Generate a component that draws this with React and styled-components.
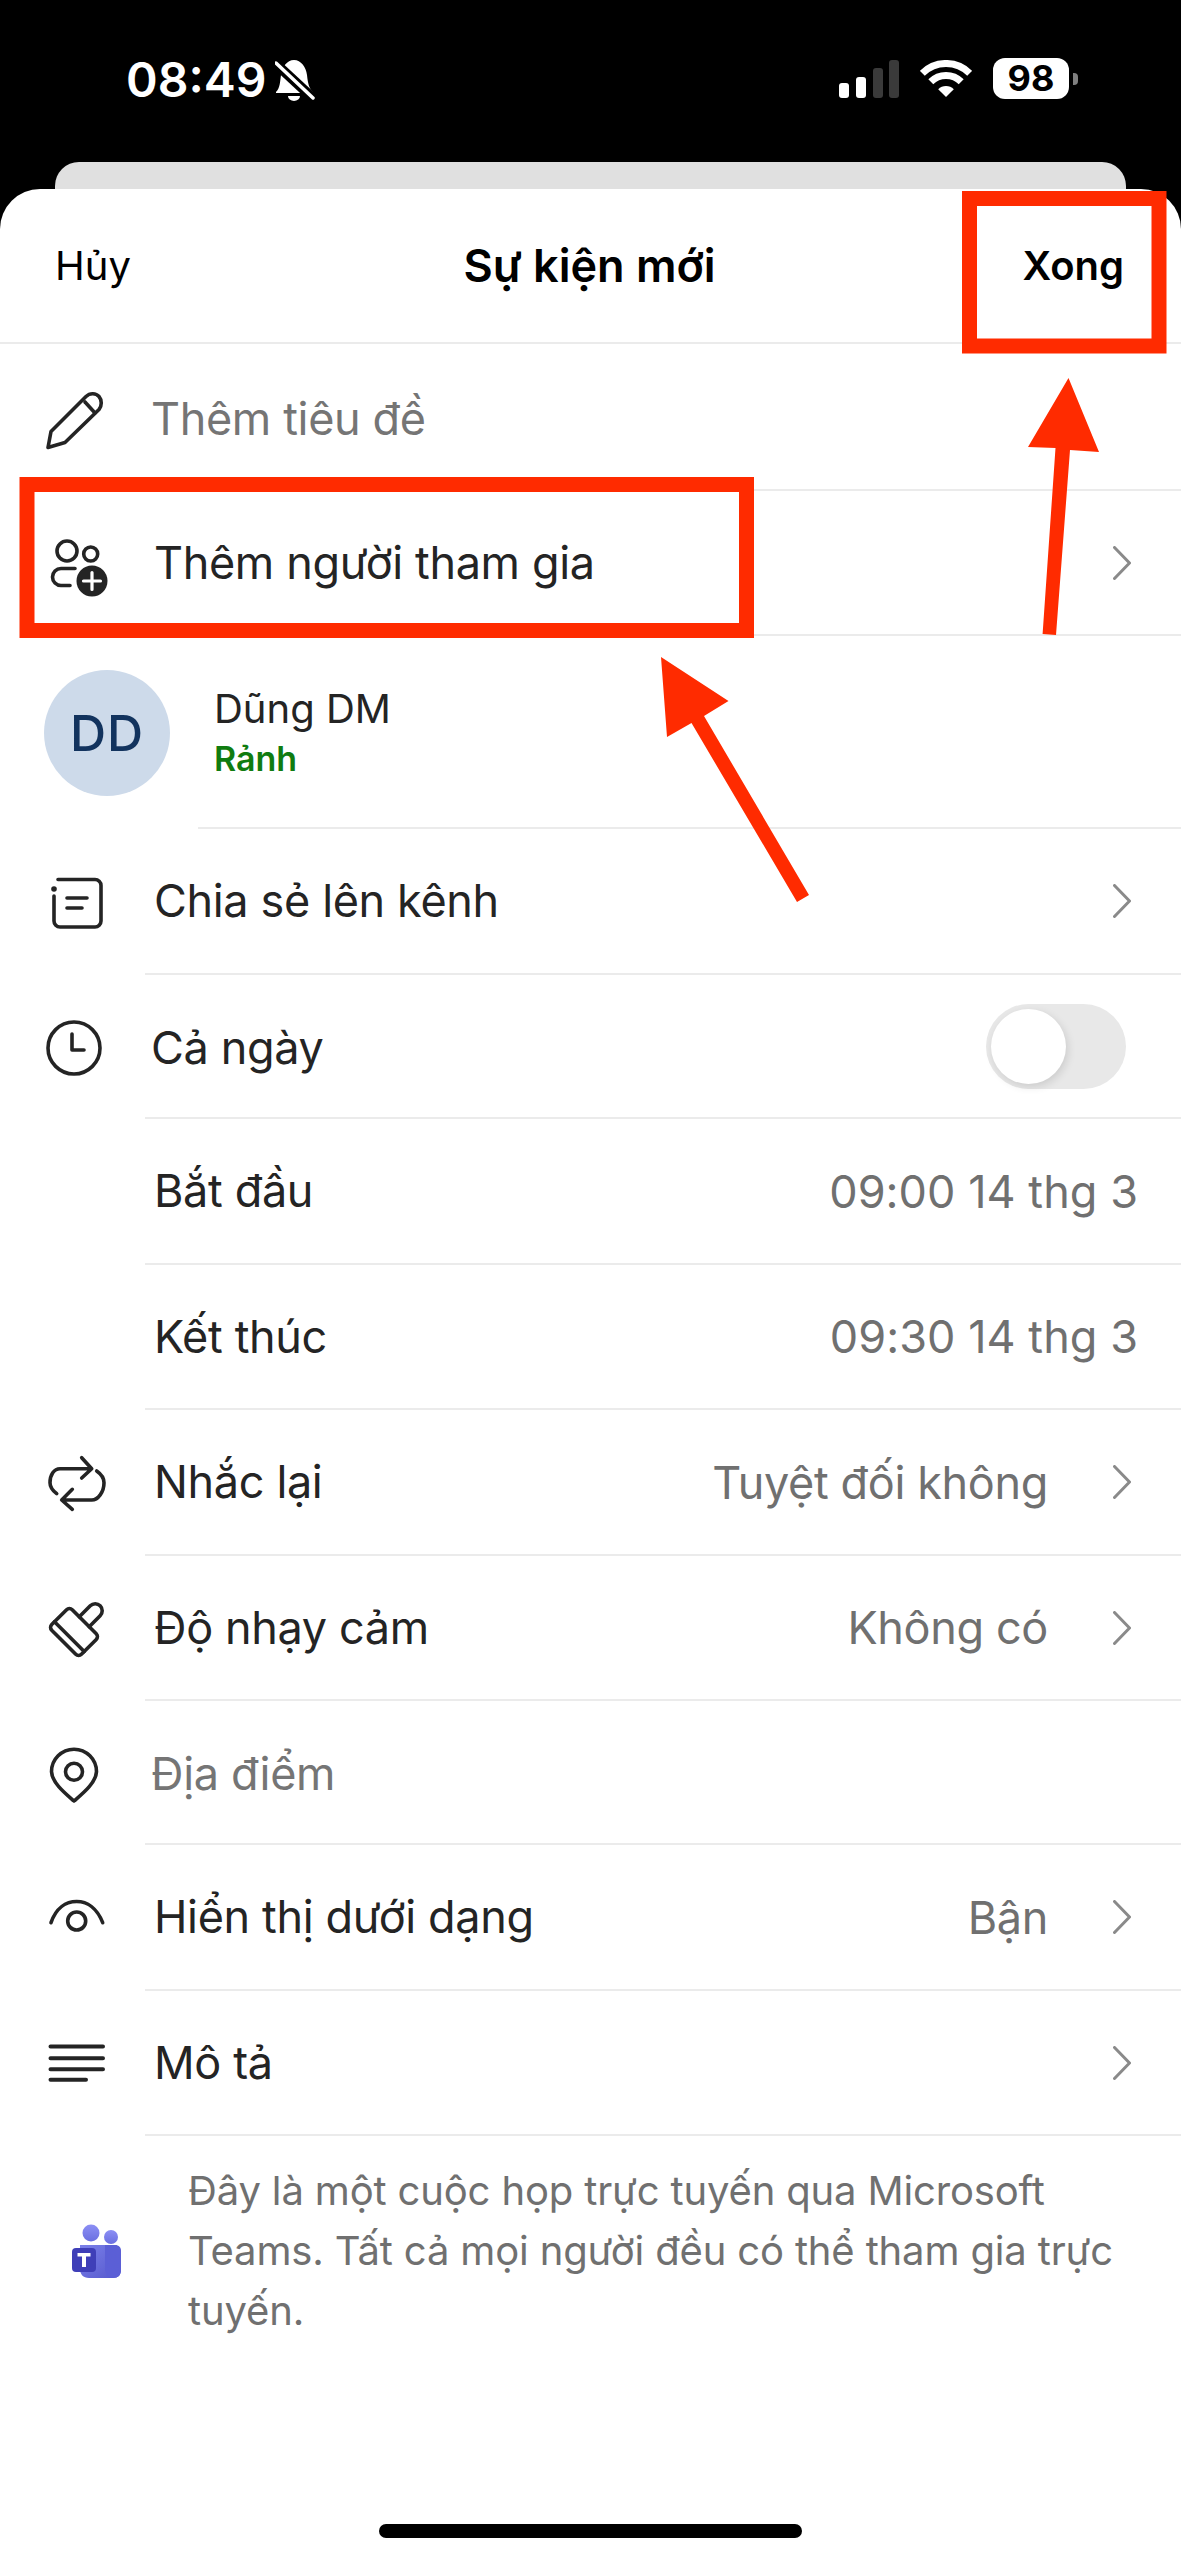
import React from 'react';
import styled, { createGlobalStyle } from 'styled-components';

const GlobalStyle = createGlobalStyle`
  html, body {
    margin: 0;
    padding: 0;
    background: #000;
  }
  * {
    box-sizing: border-box;
  }
`;

const Page = styled.div`
  position: relative;
  width: 1181px;
  height: 2560px;
  overflow: hidden;
  background: #000;
  display: flex;
  flex-direction: column;
  font-family: Inter, "Noto Sans", sans-serif;
  color: #242424;
`;

const StatusBar = styled.div`
  height: 162px;
  flex: none;
  display: flex;
  justify-content: space-between;
  align-items: flex-start;
  padding: 58px 103px 0 126px;
  color: #fff;
`;

const StatusLeft = styled.div`
  display: flex;
  align-items: center;
  gap: 9px;
`;

const Clock = styled.span`
  font-size: 48px;
  line-height: 44px;
  font-weight: 600;
`;

const StatusRight = styled.div`
  display: flex;
  align-items: center;
  gap: 21px;
`;

const Battery = styled.div`
  position: relative;
  width: 76px;
  height: 41px;
  margin-right: 9px;
  border-radius: 12px;
  background: #fff;
  color: #000;
  font-size: 36px;
  line-height: 41px;
  font-weight: 700;
  text-align: center;

  &::after {
    content: '';
    position: absolute;
    top: 15px;
    right: -9px;
    width: 5px;
    height: 12px;
    border-radius: 0 4px 4px 0;
    background: #7f7f7f;
  }
`;

const BackCard = styled.div`
  height: 27px;
  flex: none;
  margin: 0 55px;
  border-radius: 24px 24px 0 0;
  background: #e0e0e0;
`;

const Sheet = styled.div`
  flex: 1;
  display: flex;
  flex-direction: column;
  background: #fff;
  border-radius: 40px 40px 0 0;
`;

const Header = styled.div`
  height: 155px;
  flex: none;
  display: grid;
  grid-template-columns: 1fr auto 1fr;
  align-items: center;
  padding: 0 57px 0 55px;
  border-bottom: 2px solid #ebebeb;
  color: #000;
`;

const Cancel = styled.span`
  font-size: 40px;
`;

const Title = styled.span`
  font-size: 45px;
  font-weight: 600;
`;

const Done = styled.span`
  justify-self: end;
  font-size: 40px;
  font-weight: 600;
`;

const Row = styled.div`
  display: flex;
  height: ${p => p.$h}px;
  flex: none;
`;

const IconSlot = styled.div`
  width: 145px;
  flex: none;
  display: flex;
  align-items: center;
  padding-left: 46px;
`;

const Glyph = styled.svg`
  width: 60px;
  height: 60px;
  overflow: visible;
  fill: none;
  stroke: #242424;
  stroke-width: 3.6;
  stroke-linecap: round;
  stroke-linejoin: round;
`;

const RowBody = styled.div`
  flex: 1;
  min-width: 0;
  display: flex;
  align-items: center;
  padding: 0 ${p => (p.$chevron ? 50 : 43)}px 0 ${p => (p.$field ? 6 : 9)}px;
  border-bottom: 2px solid #ebebeb;
`;

const Label = styled.span`
  flex: 1;
  font-size: 45px;
  line-height: 60px;
  letter-spacing: -0.35px;
  color: ${p => (p.$placeholder ? '#757575' : '#242424')};
  position: relative;
  top: ${p => (p.$field ? 2 : 0)}px;
`;

const Value = styled.span`
  font-size: 45px;
  letter-spacing: ${p => (p.$tight ? '-0.35px' : '0.05px')};
  color: #707070;
`;

const Chevron = styled.svg`
  width: 18px;
  height: 34px;
  margin-left: 65px;
  flex: none;
  fill: none;
  stroke: #8a8a8a;
  stroke-width: 3;
  stroke-linecap: round;
  stroke-linejoin: round;
`;

const Toggle = styled.div`
  position: relative;
  width: 140px;
  height: 85px;
  margin-right: 12px;
  border-radius: 43px;
  background: #e8e8e8;
`;

const ToggleKnob = styled.div`
  position: absolute;
  top: 5px;
  left: 5px;
  width: 75px;
  height: 75px;
  border-radius: 50%;
  background: #fff;
  box-shadow: 2px 3px 8px rgba(0, 0, 0, 0.12);
`;

const AvatarSlot = styled.div`
  width: 198px;
  flex: none;
  display: flex;
  align-items: center;
  padding-left: 44px;
`;

const Avatar = styled.div`
  width: 126px;
  height: 126px;
  border-radius: 50%;
  display: flex;
  align-items: center;
  justify-content: center;
  background: #cddaea;
  color: #12335e;
  font-size: 50px;
  font-weight: 500;
  letter-spacing: 1px;
`;

const PersonBody = styled.div`
  flex: 1;
  display: flex;
  flex-direction: column;
  justify-content: center;
  padding: 0 0 0 16px;
  border-bottom: 2px solid #ebebeb;
`;

const PersonName = styled.span`
  font-size: 40px;
  line-height: 52px;
`;

const PersonStatus = styled.span`
  font-size: 34px;
  line-height: 44px;
  margin-top: 2px;
  font-weight: 600;
  color: #107c10;
`;

const NoteRow = styled.div`
  display: flex;
  align-items: center;
  padding-top: 25px;
`;

const NoteIcon = styled.div`
  width: 188px;
  flex: none;
  display: flex;
  padding-left: 71px;
`;

const NoteText = styled.p`
  margin: 0;
  width: 950px;
  font-size: 40px;
  line-height: 60px;
  letter-spacing: -0.15px;
  color: #707070;
`;

const HomeBar = styled.div`
  width: 423px;
  height: 14px;
  flex: none;
  margin: auto auto 22px;
  border-radius: 7px;
  background: #000;
`;

// annotation drawn over the screenshot: red boxes and arrows
const Annotations = styled.svg`
  position: absolute;
  top: 0;
  left: 0;
  width: 1181px;
  height: 2560px;
  pointer-events: none;
`;

const Mute = () => (
  <svg width="40" height="41" viewBox="0 0 40 41">
    <path fill="#fff" d="M19 0C26 0 31 7 32 15C33 24 34 28 38 32V33H1V32C5 28 5 22 6 15C7 7 12 0 19 0Z" />
    <path fill="#fff" d="M13 36H25A6 5 0 0 1 13 36Z" />
    <path stroke="#000" strokeWidth="10" d="M0 3L40 40" />
    <path stroke="#fff" strokeWidth="3.5" strokeLinecap="round" d="M1 3L38 38" />
  </svg>
);

const Signal = () => (
  <svg width="60" height="38" viewBox="0 0 60 38">
    <rect x="0" y="23" width="10" height="15" rx="3" fill="#fff" />
    <rect x="17" y="17" width="10" height="21" rx="3" fill="#fff" />
    <rect x="34" y="8" width="10" height="30" rx="3" fill="#3a3a3a" />
    <rect x="50" y="0" width="10" height="38" rx="3" fill="#3a3a3a" />
  </svg>
);

const Wifi = () => (
  <svg width="52" height="38" viewBox="0 0 52 38" fill="none" stroke="#fff" strokeWidth="7">
    <path d="M2.3 13.3A33.5 33.5 0 0 1 49.7 13.3" />
    <path d="M10.8 21.8A21.5 21.5 0 0 1 41.2 21.8" />
    <path fill="#fff" stroke="none" d="M26 37L18.2 29.2A11 11 0 0 1 33.8 29.2Z" />
  </svg>
);

const icons = {
  pencil: (
    <>
      <path d="M2 59.5L5 43.5L40 8.5C44 4.5 50 5 53 8.5C56 12 56 18 53 21.5L19 54.5Z" />
      <path d="M39 14L49 25" />
    </>
  ),
  people: (
    <>
      <circle cx="21" cy="17" r="10" />
      <circle cx="44.7" cy="20" r="7" />
      <path d="M29 34.5H15a8.5 8.5 0 0 0 0 17H24" />
      <circle cx="46" cy="47" r="15.5" fill="#242424" stroke="none" />
      <path d="M46 38.5V55.5M37.5 47H54.5" stroke="#fff" strokeWidth="3.2" />
    </>
  ),
  share: (
    <>
      <path d="M12 7.5H49a6 6 0 0 1 6 6V49a6 6 0 0 1-6 6H14a6 6 0 0 1-6-6V24" />
      <circle cx="8" cy="17" r="2.8" fill="#242424" stroke="none" />
      <path d="M21 26H41M21 36H36" />
    </>
  ),
  clock: (
    <>
      <circle cx="28" cy="31" r="26" />
      <path d="M26 17V33H38" />
    </>
  ),
  repeat: (
    <>
      <path d="M10.7 40.7C6 37 4 33.5 4 29.7C4 22 8 15.7 14 15.7H45.7M35.7 4.7L45.7 15.7L35.7 25" />
      <path d="M50.7 18C55 21 58 25 58 29.7C58 39 52 47 45.7 47H15.7M26.3 36.3L15.7 47L26.3 56.3" />
    </>
  ),
  brush: (
    <g transform="translate(28 33) rotate(45)">
      <rect x="-21" y="-14.5" width="42" height="29" rx="4" />
      <path d="M-21 6.6H21" />
      <path d="M-7 -14.5V-30a7 7 0 0 1 14 0V-14.5" />
    </g>
  ),
  pin: (
    <>
      <path d="M28 58C20 51 6 40 5.5 28.7A22.5 22.5 0 0 1 50.5 28.7C50 40 36 51 28 58Z" />
      <circle cx="28" cy="28.7" r="8.5" />
    </>
  ),
  eye: (
    <>
      <path d="M5 34.7C10 20 20 13.5 30.7 13.5C41 13.5 51 20 56.7 34.7" />
      <circle cx="30.7" cy="33" r="9" />
    </>
  ),
  lines: <path strokeWidth="4" d="M4.5 12.5H57M4.5 24.2H57M4.5 35.2H57M4.5 45.8H40" />,
};

const TeamsLogo = () => (
  <svg width="50" height="54" viewBox="0 0 50 54">
    <defs>
      <linearGradient id="teamsHead" x1="0" y1="0" x2="0" y2="1">
        <stop offset="0" stopColor="#8c8ff5" />
        <stop offset="1" stopColor="#6a6fe0" />
      </linearGradient>
      <linearGradient id="teamsBody" x1="0" y1="0" x2="1" y2="1">
        <stop offset="0" stopColor="#7b80ea" />
        <stop offset="1" stopColor="#5558cc" />
      </linearGradient>
    </defs>
    <circle cx="20" cy="9" r="8.5" fill="url(#teamsHead)" />
    <circle cx="40" cy="13" r="7" fill="url(#teamsHead)" />
    <path fill="url(#teamsBody)" d="M9 21H42C46 21 50 23 50 28V46C50 51 47 54 42 54H18C12 54 9 50 9 45Z" />
    <path fill="#5b5fd6" d="M34 21H44C48 21 50 23 50 28V46C50 51 47 54 42 54C37 54 34 50 34 45Z" />
    <rect x="1" y="24" width="24" height="24" rx="4" fill="#3f3fb8" />
    <path fill="#fff" d="M6.5 29H19.5V32.4H15V43H11V32.4H6.5Z" />
  </svg>
);

const fields = [
  { icon: 'pencil', label: 'Thêm tiêu đề', h: 147, placeholder: true, field: true },
  { icon: 'people', label: 'Thêm người tham gia', h: 145, chevron: true },
];

const rows = [
  { icon: 'share', label: 'Chia sẻ lên kênh', h: 146, chevron: true },
  { icon: 'clock', label: 'Cả ngày', h: 144, toggle: true, field: true },
  { label: 'Bắt đầu', h: 146, value: '09:00 14 thg 3' },
  { label: 'Kết thúc', h: 145, value: '09:30 14 thg 3' },
  { icon: 'repeat', label: 'Nhắc lại', h: 146, value: 'Tuyệt đối không', chevron: true },
  { icon: 'brush', label: 'Độ nhạy cảm', h: 145, value: 'Không có', chevron: true },
  { icon: 'pin', label: 'Địa điểm', h: 144, placeholder: true, field: true },
  { icon: 'eye', label: 'Hiển thị dưới dạng', h: 146, value: 'Bận', chevron: true },
  { icon: 'lines', label: 'Mô tả', h: 145, chevron: true },
];

const EventRow = ({ row }) => (
  <Row $h={row.h}>
    <IconSlot>{row.icon && <Glyph viewBox="0 0 60 60">{icons[row.icon]}</Glyph>}</IconSlot>
    <RowBody $field={row.field} $chevron={row.chevron}>
      <Label $placeholder={row.placeholder} $field={row.field}>{row.label}</Label>
      {row.value && <Value $tight={row.chevron}>{row.value}</Value>}
      {row.toggle && (
        <Toggle>
          <ToggleKnob />
        </Toggle>
      )}
      {row.chevron && (
        <Chevron viewBox="0 0 18 34">
          <path d="M1.5 1.5L16.5 17L1.5 32.5" />
        </Chevron>
      )}
    </RowBody>
  </Row>
);

const App = () => (
  <Page>
    <GlobalStyle />
    <StatusBar>
      <StatusLeft>
        <Clock>08:49</Clock>
        <Mute />
      </StatusLeft>
      <StatusRight>
        <Signal />
        <Wifi />
        <Battery>98</Battery>
      </StatusRight>
    </StatusBar>
    <BackCard />
    <Sheet>
      <Header>
        <Cancel>Hủy</Cancel>
        <Title>Sự kiện mới</Title>
        <Done>Xong</Done>
      </Header>
      {fields.map(row => (
        <EventRow key={row.label} row={row} />
      ))}
      <Row $h={193}>
        <AvatarSlot>
          <Avatar>DD</Avatar>
        </AvatarSlot>
        <PersonBody>
          <PersonName>Dũng DM</PersonName>
          <PersonStatus>Rảnh</PersonStatus>
        </PersonBody>
      </Row>
      {rows.map(row => (
        <EventRow key={row.label} row={row} />
      ))}
      <NoteRow>
        <NoteIcon>
          <TeamsLogo />
        </NoteIcon>
        <NoteText>Đây là một cuộc họp trực tuyến qua Microsoft Teams. Tất cả mọi người đều có thể tham gia trực tuyến.</NoteText>
      </NoteRow>
      <HomeBar />
    </Sheet>
    <Annotations viewBox="0 0 1181 2560">
      <rect x="969.5" y="198.5" width="189.5" height="147.5" fill="none" stroke="#ff2b00" strokeWidth="15" />
      <rect x="27" y="484.5" width="719.5" height="146" fill="none" stroke="#ff2b00" strokeWidth="15" />
      <polygon fill="#ff2b00" points="1068.5,378 1099,452 1070,450 1056,635 1042.6,634 1055.5,448 1028,447" />
      <polygon fill="#ff2b00" points="661,657 728.5,701 704,716 809,895 797,902 691.5,723 667,737" />
    </Annotations>
  </Page>
);

export default App;
